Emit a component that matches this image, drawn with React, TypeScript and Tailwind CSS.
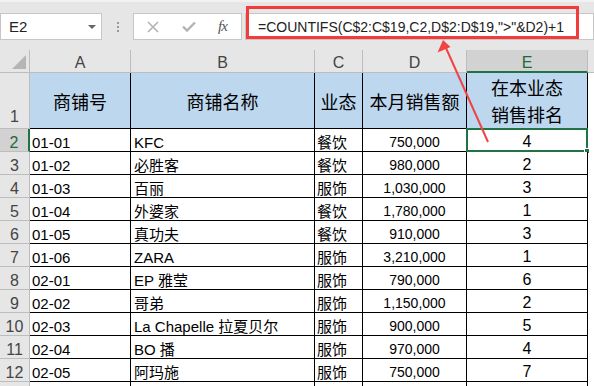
import React from "react";

const rows: string[][] = [
  ["01-01", "KFC", "餐饮", "750,000", "4"],
  ["01-02", "必胜客", "餐饮", "980,000", "2"],
  ["01-03", "百丽", "服饰", "1,030,000", "3"],
  ["01-04", "外婆家", "餐饮", "1,780,000", "1"],
  ["01-05", "真功夫", "餐饮", "910,000", "3"],
  ["01-06", "ZARA", "服饰", "3,210,000", "1"],
  ["02-01", "EP 雅莹", "服饰", "790,000", "6"],
  ["02-02", "哥弟", "服饰", "1,150,000", "2"],
  ["02-03", "La Chapelle 拉夏贝尔", "服饰", "900,000", "5"],
  ["02-04", "BO 播", "服饰", "970,000", "4"],
  ["02-05", "阿玛施", "服饰", "750,000", "7"],
  ["", "", "", "", ""],
];

const font = "font-['Liberation_Sans','Noto_Sans_CJK_SC',sans-serif]";

export default function App() {
  return (
    <div className={`relative w-[594px] h-[386px] overflow-hidden bg-[#e6e6e6] ${font} text-black`}>
      {/* Formula bar */}
      <div className="h-[50px] border-t-[2px] border-[#f2f2f2] pt-[11px] flex items-start">
        <div className="w-[102px] h-[27px] bg-white border border-[#c6c6c6] flex items-center justify-between pl-[8px] pr-[5px]">
          <span className="text-[15px] text-[#222] leading-none">E2</span>
          <span className="w-0 h-0 border-l-[4px] border-r-[4px] border-t-[4px] border-l-transparent border-r-transparent border-t-[#666]" />
        </div>
        <div className="w-[31px] h-[27px] flex flex-col items-center justify-center gap-[2px]">
          <span className="w-[2px] h-[2px] bg-[#9a9a9a]" />
          <span className="w-[2px] h-[2px] bg-[#9a9a9a]" />
          <span className="w-[2px] h-[2px] bg-[#9a9a9a]" />
        </div>
        <div className="w-[109px] h-[27px] bg-white border border-[#c6c6c6] flex items-center pl-[13px]">
          <svg width="12" height="12" viewBox="0 0 12 12" className="mr-[23px]">
            <path d="M1 1 L11 11 M11 1 L1 11" stroke="#b3b3b3" strokeWidth="1.6" />
          </svg>
          <svg width="14" height="11" viewBox="0 0 14 11" className="mr-[22px]">
            <path d="M1 5.5 L5 9.5 L13 1.5" stroke="#b3b3b3" strokeWidth="2.4" fill="none" />
          </svg>
          <span className="font-['Liberation_Serif',serif] italic text-[15px] text-[#555] leading-none tracking-[-1px]">fx</span>
        </div>
        <div className="ml-[3px] flex-1 h-[27px] bg-white border border-[#c6c6c6] flex items-center pl-[12px]">
          <span className="text-[14px] text-[#222] leading-none whitespace-nowrap">
            =COUNTIFS(C$2:C$19,C2,D$2:D$19,"&gt;"&amp;D2)+1
          </span>
        </div>
      </div>

      {/* Sheet */}
      <div className="grid grid-cols-[30px_101px_184px_48px_104px_121px_1fr] grid-rows-[23px_56px_repeat(12,23px)]">
        {/* column header row */}
        <div className="relative bg-[#e6e6e6] border-r border-b border-[#bdbdbd]">
          <svg className="absolute left-[12px] top-[5px]" width="14" height="14" viewBox="0 0 14 14">
            <path d="M14 0 L14 14 L0 14 Z" fill="#b5b5b5" />
          </svg>
        </div>
        {["A", "B", "C", "D"].map((c) => (
          <div key={c} className="bg-[#e6e6e6] border-r border-b border-[#bdbdbd] flex items-end justify-center text-[16px] leading-[17px] text-[#444] pb-[1px]">
            {c}
          </div>
        ))}
        <div className="bg-[#d2d2d2] border-r border-[#bdbdbd] border-b-2 border-b-[#217346] flex items-end justify-center text-[16px] leading-[17px] text-[#1d6a3f]">
          E
        </div>
        <div className="bg-[#e6e6e6] border-b border-[#bdbdbd]" />

        {/* row 1 */}
        <div className="bg-[#e6e6e6] border-r border-b border-[#bdbdbd] flex items-end justify-center text-[16px] leading-[17px] text-[#444] pb-[3px]">
          1
        </div>
        {["商铺号", "商铺名称", "业态", "本月销售额"].map((t) => (
          <div key={t} className="bg-[#bdd7ee] border-r border-b border-black flex items-center justify-center font-['Noto_Sans_CJK_SC',sans-serif] text-[18px] leading-[20px] whitespace-nowrap">
            {t}
          </div>
        ))}
        <div className="bg-[#bdd7ee] border-r border-b border-black flex flex-col items-center justify-center font-['Noto_Sans_CJK_SC',sans-serif] text-[18px] leading-[27px]">
          <span>在本业态</span>
          <span>销售排名</span>
        </div>
        <div className="bg-white" />

        {/* data rows */}
        {rows.map((r, i) => {
          const n = i + 2;
          const sel = n === 2;
          const last = i === rows.length - 1;
          return (
            <React.Fragment key={n}>
              <div
                className={`flex items-end justify-center text-[16px] leading-[17px] ${
                  sel
                    ? "bg-[#d2d2d2] text-[#1d6a3f] border-r-2 border-r-[#217346] border-b border-b-[#bdbdbd]"
                    : "bg-[#e6e6e6] text-[#444] border-r border-b border-[#bdbdbd]"
                }`}
              >
                {last ? "" : n}
              </div>
              <div className="bg-white border-r border-b border-black flex items-end pl-[2px] text-[15px] leading-[17px] whitespace-nowrap">
                {r[0]}
              </div>
              <div className="bg-white border-r border-b border-black flex items-end pl-[3px] text-[15px] leading-[17px] whitespace-nowrap">
                {r[1]}
              </div>
              <div className="bg-white border-r border-b border-black flex items-end pl-[2px] text-[15px] leading-[17px] whitespace-nowrap">
                {r[2]}
              </div>
              <div className="bg-white border-r border-b border-black flex items-end justify-center text-[14px] leading-[17px] whitespace-nowrap">
                {r[3]}
              </div>
              <div className="relative bg-white border-r border-b border-black flex items-end justify-center text-[16px] leading-[18px] whitespace-nowrap">
                {r[4]}
                {sel && (
                  <>
                    <span className="absolute -left-[1px] -top-[1px] -right-[1px] -bottom-[1px] border-2 border-[#217346]" />
                    <span className="absolute -right-[3px] -bottom-[3px] w-[6px] h-[6px] bg-[#217346] border border-white" />
                  </>
                )}
              </div>
              <div className="bg-white" />
            </React.Fragment>
          );
        })}
      </div>

      {/* Annotations */}
      <div className="absolute left-[246px] top-[6px] w-[333px] h-[33px] border-[3px] border-[#f23b3b]" />
      <svg className="absolute left-0 top-0 pointer-events-none" width="594" height="386">
        <line x1="488" y1="142" x2="446" y2="48" stroke="#f04444" strokeWidth="2" />
        <path d="M443 40 L437.5 52.5 L450.5 47 Z" fill="#f04444" />
      </svg>
    </div>
  );
}
